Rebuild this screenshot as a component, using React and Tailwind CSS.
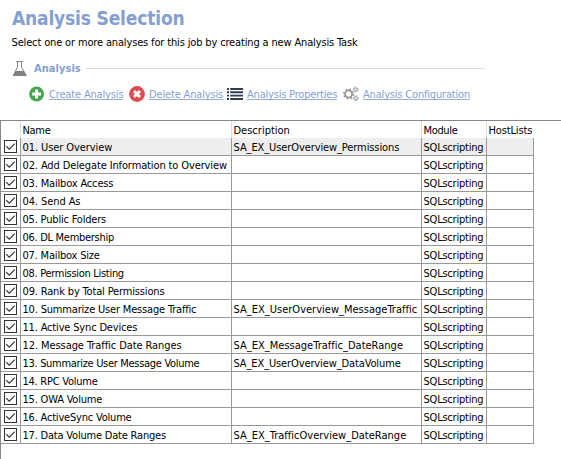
import React from "react";

const rows = [
  ["01. User Overview", "tracking-[-0.09px]", "SA_EX_UserOverview_Permissions", "tracking-[-0.1px]"],
  ["02. Add Delegate Information to Overview", "tracking-[-0.12px]", ""],
  ["03. Mailbox Access", "tracking-[-0.17px]", ""],
  ["04. Send As", "tracking-[-0.09px]", ""],
  ["05. Public Folders", "tracking-[-0.19px]", ""],
  ["06. DL Membership", "tracking-[-0.29px]", ""],
  ["07. Mailbox Size", "tracking-[-0.19px]", ""],
  ["08. Permission Listing", "tracking-[-0.3px]", ""],
  ["09. Rank by Total Permissions", "tracking-[-0.16px]", ""],
  ["10. Summarize User Message Traffic", "tracking-[-0.18px]", "SA_EX_UserOverview_MessageTraffic", "tracking-[0.01px]"],
  ["11. Active Sync Devices", "tracking-[-0.17px]", ""],
  ["12. Message Traffic Date Ranges", "tracking-[-0.08px]", "SA_EX_MessageTraffic_DateRange", "tracking-[0.01px]"],
  ["13. Summarize User Message Volume", "tracking-[-0.31px]", "SA_EX_UserOverview_DataVolume", "tracking-[-0.12px]"],
  ["14. RPC Volume", "tracking-[-0.25px]", ""],
  ["15. OWA Volume", "tracking-[-0.2px]", ""],
  ["16. ActiveSync Volume", "tracking-[-0.2px]", ""],
  ["17. Data Volume Date Ranges", "tracking-[-0.2px]", "SA_EX_TrafficOverview_DateRange", "tracking-[0.01px]"],
];

const COLS = "grid grid-cols-[20px_211px_190px_65px_47px] w-[533px]";

function Flask() {
  return (
    <svg width="16" height="16" viewBox="0 0 16 16" className="shrink-0">
      <path d="M4 .5h7M5.5 1v5L1.3 14.5h12.9L9.5 6V1" fill="none" stroke="#858888" strokeWidth="1" />
      <path d="M3.6 10h8.3L14.6 15H.9z" fill="#7f8282" />
    </svg>
  );
}

function Plus() {
  return (
    <svg width="16" height="16" viewBox="0 0 16 16" className="shrink-0">
      <circle cx="7.6" cy="8" r="7.5" fill="#47a650" />
      <path d="M7.6 3.6v8.8M3.2 8H12" stroke="#fff" strokeWidth="2.8" />
    </svg>
  );
}

function Cross() {
  return (
    <svg width="16" height="16" viewBox="0 0 16 16" className="shrink-0">
      <circle cx="8" cy="8" r="7.9" fill="#df4b4e" />
      <path d="M5 5l6 6M11 5l-6 6" stroke="#fff" strokeWidth="3" />
    </svg>
  );
}

function List() {
  return (
    <svg width="16" height="12" viewBox="0 0 16 12" className="shrink-0">
      <path d="M0 1h2M0 4.3h2M0 7.6h2M0 11h2M3.2 1H16M3.2 4.3H16M3.2 7.6H16M3.2 11H16" stroke="#2f3d50" strokeWidth="1.9" />
    </svg>
  );
}

function Gears() {
  return (
    <svg width="16" height="16" viewBox="0 0 16 16" className="shrink-0" fill="none" stroke="#8f9294">
      <circle cx="5.6" cy="8" r="3.5" strokeWidth="1.7" />
      <circle cx="5.6" cy="8" r="4.9" strokeWidth="1.3" strokeDasharray="1.9 1.95" />
      <circle cx="12.7" cy="3.6" r="1.6" strokeWidth="1" />
      <circle cx="12.7" cy="3.6" r="2.5" strokeWidth=".9" strokeDasharray="1 .96" />
      <circle cx="12.7" cy="12.2" r="1.6" strokeWidth="1" />
      <circle cx="12.7" cy="12.2" r="2.5" strokeWidth=".9" strokeDasharray="1 .96" />
    </svg>
  );
}

function Check() {
  return (
    <svg width="13" height="13" viewBox="0 0 13 13" className="shrink-0">
      <rect x=".5" y=".5" width="12" height="12" fill="#fff" stroke="#333" />
      <path d="M2.2 6.2l3 3 5.6-5.6" fill="none" stroke="#333" strokeWidth="1.2" />
    </svg>
  );
}

function Action({ icon, label, className, tracking }) {
  return (
    <div className={"flex items-center gap-1 " + className}>
      {icon}
      <a className={"h-[12px] border-b border-[#9aaedb] text-[11px] leading-[14px] text-[#84a0d6] " + tracking}>{label}</a>
    </div>
  );
}

function Cell({ children, className = "" }) {
  return <div className={"border-r border-b border-[#999] pt-[2px] pl-[1.5px] leading-[15px] " + className}>{children}</div>;
}

export default function App() {
  return (
    <div className="h-[459px] w-[561px] overflow-hidden bg-white font-['DejaVu_Sans_Condensed','DejaVu_Sans',sans-serif] text-[11px] whitespace-nowrap text-black [font-stretch:condensed]">
      <header className="flex h-[120px] flex-col">
        <h1 className="mt-[6px] ml-[12px] h-[24px] text-[19px] leading-[24px] font-bold tracking-[-0.17px] text-[#84a0d2]">Analysis Selection</h1>
        <p className="mt-[5px] ml-[11.5px] h-[16px] leading-[16px] tracking-[-0.15px]">Select one or more analyses for this job by creating a new Analysis Task</p>
        <div className="mt-[9px] ml-[12px] flex h-[17px] w-[473px] items-center">
          <Flask />
          <h2 className="ml-[6px] w-[52px] pt-px text-[11px] leading-[16px] font-bold tracking-[0.05px] text-[#84a0d2]">Analysis</h2>
          <div className="h-px flex-1 bg-[#ddd]" />
        </div>
        <div className="mt-[8px] ml-[29px] flex h-[18px] items-center">
          <Action className="w-[100px]" icon={<Plus />} label="Create Analysis" tracking="tracking-[-0.16px]" />
          <Action className="w-[98px]" icon={<Cross />} label="Delete Analysis" tracking="tracking-[-0.16px]" />
          <Action className="w-[116px]" icon={<List />} label="Analysis Properties" tracking="tracking-[-0.2px]" />
          <Action className="" icon={<Gears />} label="Analysis Configuration" tracking="tracking-[-0.18px]" />
        </div>
      </header>
      <main className="h-[339px] border-t border-l border-[#888]">
        <div className={COLS + " h-[17px] leading-[19px]"}>
          <div className="h-[17px] border-r border-[#ddd]" />
          <div className="h-[17px] border-r border-[#ddd] pl-[1.5px] tracking-[-0.3px]">Name</div>
          <div className="h-[17px] border-r border-[#ddd] pl-[1.5px]">Description</div>
          <div className="h-[17px] border-r border-[#ddd] pl-[1.5px] tracking-[-0.35px]">Module</div>
          <div className="h-[17px] pl-[1.5px] tracking-[-0.15px]">HostLists</div>
        </div>
        {rows.map(([name, nameTracking, description, descriptionTracking], i) => (
          <div key={name} className={COLS + " h-[18px]" + (i === 0 ? " bg-[#eee]" : "")}>
            <div className="flex items-center border-r border-b border-[#999] bg-white pl-[3px]"><Check /></div>
            <Cell className={nameTracking}>{name}</Cell>
            <Cell className={descriptionTracking}>{description}</Cell>
            <Cell className="tracking-[-0.22px]">SQLscripting</Cell>
            <Cell />
          </div>
        ))}
      </main>
    </div>
  );
}
